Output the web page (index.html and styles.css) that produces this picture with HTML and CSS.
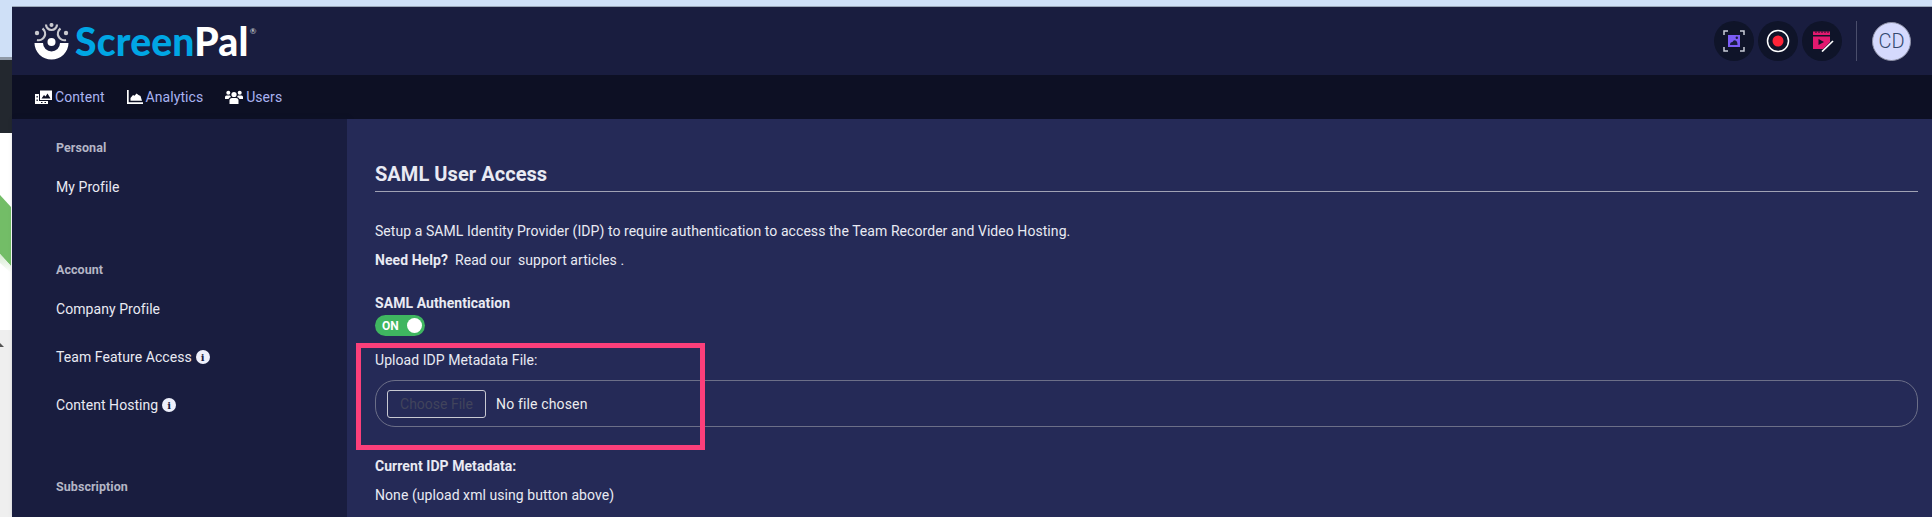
FILE: index.html
```html
<!DOCTYPE html>
<html lang="en">
<head>
<meta charset="utf-8">
<title>SAML User Access</title>
<link rel="stylesheet" href="styles.css">
</head>
<body>
<div class="topstrip"></div>
<div class="shell">
  <div class="backdrop">
    <div class="bd-blue"></div>
    <div class="bd-dark"></div>
    <div class="bd-white">
      <svg class="bd-shape" width="11" height="197" viewBox="0 0 11 197"><defs><linearGradient id="fade" x1="0" y1="0" x2="0" y2="1"><stop offset="0" stop-color="#d5ead0"/><stop offset="1" stop-color="#fff"/></linearGradient></defs><polygon points="0,62 11,74 11,133 0,121" fill="#73bd67"/><polygon points="0,121 11,133 11,140 0,130" fill="url(#fade)"/></svg>
    </div>
    <div class="bd-grey"><span class="bd-arrow"></span></div>
  </div>
  <div class="app">
    <header class="header">
      <a class="logo">
        <svg class="logo-mark" width="36" height="37" viewBox="0 0 36 37">
          <path d="M0.500 20 H9 A8.500 8.500 0 0 0 26 20 H34.500 A17 16.500 0 0 1 0.500 20Z" fill="#fff"/>
          <circle cx="17.500" cy="19" r="4" fill="#fff"/>
          <circle cx="17.500" cy="1.900" r="2" fill="#c9c9cf"/>
          <path d="M12 1.500 A5.500 5.500 0 0 0 23 1.500" stroke="#c9c9cf" stroke-width="2.200" fill="none"/>
          <circle cx="3" cy="10" r="2.200" fill="#c9c9cf"/>
          <path d="M8.500 5.500 A6.500 6.500 0 0 1 3 17" stroke="#c9c9cf" stroke-width="2.200" fill="none"/>
          <circle cx="32" cy="10" r="2.200" fill="#c9c9cf"/>
          <path d="M26.500 5.500 A6.500 6.500 0 0 0 32 17" stroke="#c9c9cf" stroke-width="2.200" fill="none"/>
        </svg>
        <span class="logo-text"><span class="logo-blue">Screen</span><span class="logo-white">Pal</span><sup class="logo-r">®</sup></span>
      </a>
      <div class="header-actions">
        <span class="round">
          <svg width="22" height="22" viewBox="0 0 22 22">
            <path d="M1 5V1H5M17 1H21V5M21 17V21H17M5 21H1V17" stroke="#c9cbd6" stroke-width="1.500" fill="none"/>
            <rect x="5" y="5" width="12" height="12" fill="#7b5cf5"/>
            <path d="M7 15 q0-3 2.500-3 q1-2.500 3-1.500 q2 .500 2 4.500Z" fill="#191d3f"/>
            <circle cx="13.800" cy="7.800" r="1.200" fill="#191d3f"/>
          </svg>
        </span>
        <span class="round">
          <svg width="24" height="24" viewBox="0 0 24 24">
            <circle cx="12" cy="12" r="10.500" stroke="#fff" stroke-width="1.500" fill="none"/>
            <circle cx="12" cy="12" r="5.500" fill="#ff2438"/>
          </svg>
        </span>
        <span class="round">
          <svg width="24" height="22" viewBox="0 0 24 22">
            <path d="M3 1.500 H20 V5 H3Z" fill="#e2196f"/>
            <path d="M6 1.500 V3 M9 1.500 V3 M12 1.500 V3 M15 1.500 V3 M18 1.500 V3" stroke="#0f1429" stroke-width="1"/>
            <path d="M3 6.500 H20 V12 L13 19 H3Z" fill="#e2196f"/>
            <path d="M8.500 9 L14 12 L8.500 15Z" fill="#0f1429"/>
            <path d="M12 21.500 L23 11" stroke="#fff" stroke-width="1.700"/>
          </svg>
        </span>
        <span class="sep"></span>
        <span class="avatar">CD</span>
      </div>
    </header>
    <nav class="nav">
      <a class="nav-item">
        <svg width="17" height="14" viewBox="0 0 17 14"><path d="M5 0.500 H17 V10 H5Z" fill="#fff"/><path d="M6.500 8.500 L9 5 L10.500 6.500 L12.500 3.500 L15.500 8.500Z" fill="#0d1024"/><path d="M0 4 H4 V14 H0Z M4 11 H13 V14 H4Z" fill="#fff"/><path d="M1.500 6 H2.800 V7.500 H1.500Z M1.500 9.500 H2.800 V11 H1.500Z M6 12 H7.500 V13 H6Z M9.500 12 H11 V13 H9.500Z" fill="#0d1024"/></svg>
        <span>Content</span>
      </a>
      <a class="nav-item">
        <svg width="16" height="14" viewBox="0 0 16 14"><path d="M0 0 H1.700 V12.300 H16 V14 H0Z" fill="#fff"/><path d="M3.500 10.800 V8 L6 5 L7.500 5.800 L9.500 3.500 L11.500 5 L13.500 6 L15 10.800Z" fill="#fff"/></svg>
        <span>Analytics</span>
      </a>
      <a class="nav-item">
        <svg width="18" height="14" viewBox="0 0 18 14"><circle cx="9" cy="4.500" r="2.600" fill="#fff"/><path d="M4.500 14 V10.500 Q4.500 8 7 8 H11 Q13.500 8 13.500 10.500 V14Z" fill="#fff"/><circle cx="3.300" cy="2.800" r="2" fill="#fff"/><circle cx="14.700" cy="2.800" r="2" fill="#fff"/><path d="M0 9 V7 Q0 5.500 1.500 5.500 H5 Q5.800 6.500 6 7 Q4 7.500 3.500 9Z M18 9 V7 Q18 5.500 16.500 5.500 H13 Q12.200 6.500 12 7 Q14 7.500 14.500 9Z" fill="#fff"/></svg>
        <span>Users</span>
      </a>
    </nav>
    <div class="body">
      <aside class="sidebar">
        <section class="side-section first">
          <h4 class="side-heading">Personal</h4>
          <a class="side-link">My Profile</a>
        </section>
        <section class="side-section">
          <h4 class="side-heading">Account</h4>
          <a class="side-link">Company Profile</a>
          <a class="side-link">Team Feature Access <span class="info">i</span></a>
          <a class="side-link">Content Hosting <span class="info">i</span></a>
        </section>
        <section class="side-section">
          <h4 class="side-heading">Subscription</h4>
        </section>
      </aside>
      <main class="main">
        <h2 class="title">SAML User Access</h2>
        <p class="para">Setup a SAML Identity Provider (IDP) to require authentication to access the Team Recorder and Video Hosting.</p>
        <p class="para help"><strong>Need Help?</strong>&nbsp; Read our &nbsp;support articles .</p>
        <div class="label strong-label">SAML Authentication</div>
        <div class="toggle"><span class="toggle-text">ON</span><span class="knob"></span></div>
        <div class="label upload-label">Upload IDP Metadata File:</div>
        <div class="file-box"><input class="file" type="file" disabled></div>
        <div class="label strong-label current">Current IDP Metadata:</div>
        <div class="label none">None (upload xml using button above)</div>
        <div class="callout"></div>
      </main>
    </div>
  </div>
</div>
</body>
</html>
```
FILE: styles.css
```css
* { box-sizing: border-box; }
html, body { margin: 0; height: 517px; overflow: hidden; }
body { background: #cfe0f7; font-family: Roboto, "Liberation Sans", sans-serif; font-size: 14px; letter-spacing: 0.06px; color: #e9eaf3; }
.topstrip { height: 7px; background: #cfe0f7; border-bottom: 1px solid #9aa7b8; }
.shell { display: flex; height: 510px; }
.backdrop { width: 12px; flex: none; display: flex; flex-direction: column; margin-top: -7px; }
.bd-blue { height: 60px; background: #cfe0f7; flex: none; border-bottom: 3px solid #8f99a6; }
.bd-dark { height: 73px; background: #23282f; flex: none; }
.bd-white { height: 197px; background: #fff; flex: none; }
.bd-shape { display: block; }
.bd-grey { flex: 1; background: #efefef; position: relative; }
.bd-arrow { position: absolute; left: 0; top: 13px; border-left: 4px solid transparent; border-right: 4px solid transparent; border-bottom: 4px solid #555; margin-left: -4px; }
.app { flex: 1; min-width: 0; display: flex; flex-direction: column; }
.header { height: 68px; flex: none; background: #191d3f; display: flex; align-items: center; justify-content: space-between; padding: 0 21px 0 22px; }
.logo { display: flex; align-items: center; gap: 5px; }
.logo-mark { display: block; }
.logo-text { font-family: Lato, Roboto, sans-serif; font-weight: 900; font-size: 39px; line-height: 40px; letter-spacing: 0.2px; position: relative; }
.logo-blue { color: #00a6e4; }
.logo-white { color: #fff; }
.logo-r { font-size: 8px; font-weight: 400; color: #ddd; vertical-align: top; line-height: 20px; margin-left: 1px; }
.header-actions { display: flex; align-items: center; gap: 4px; }
.round { width: 40px; height: 40px; border-radius: 50%; background: #0f1429; display: flex; align-items: center; justify-content: center; }
.sep { width: 1px; height: 40px; background: #4a4e6b; margin: 0 11px 0 10px; }
.avatar { width: 39px; height: 39px; border-radius: 50%; background: #d5d9fd; border: 1px solid #8f92a8; color: #33486e; font-size: 20px; font-weight: 300; letter-spacing: 0; display: flex; align-items: center; justify-content: center; }
.nav { height: 44px; flex: none; background: #0d1024; display: flex; align-items: center; padding-left: 23px; gap: 22px; }
.nav-item { display: flex; align-items: center; gap: 3px; color: #a9b3f1; font-size: 14px; }
.nav-item svg { display: block; }
.body { flex: 1; min-height: 0; display: flex; }
.sidebar { width: 335px; flex: none; background: #191d3f; padding: 19px 0 0 44px; box-shadow: 2px 0 4px rgba(15, 18, 45, .5); position: relative; }
.side-section { margin-bottom: 48px; }
.side-section.first { margin-bottom: 49px; }
.side-heading { margin: 0 0 5px; height: 20px; line-height: 20px; font-size: 12.5px; font-weight: 700; color: #b4b6c6; }
.side-link { display: flex; align-items: center; gap: 4px; height: 48px; color: #e9eaf3; font-size: 14px; }
.info { width: 14px; height: 14px; border-radius: 50%; background: #eef0fb; color: #191d3f; font-family: "DejaVu Serif", serif; font-size: 10px; font-weight: 700; display: inline-flex; align-items: center; justify-content: center; }
.main { flex: 1; min-width: 0; background: #252a57; padding: 0 14px 0 28px; position: relative; }
.title { margin: 42px 0 0; height: 31px; line-height: 27px; font-size: 20px; font-weight: 700; color: #e9eaf3; border-bottom: 1px solid #a0a2b4; }
.para { margin: 0; line-height: 20px; }
.title + .para { margin-top: 29px; }
.help { margin-top: 9px; }
.help strong { font-weight: 700; }
.label { line-height: 20px; }
.strong-label { font-weight: 700; }
.help + .label { margin-top: 23px; }
.toggle { width: 50px; height: 21px; margin-top: 2px; border-radius: 11px; background: #3fb660; display: flex; align-items: center; justify-content: space-between; padding: 0 3px 0 7px; }
.toggle-text { font-size: 12px; font-weight: 700; color: #fff; }
.knob { width: 15px; height: 15px; border-radius: 50%; background: #fff; }
.upload-label { margin-top: 14px; }
.file-box { margin-top: 10px; height: 47px; border: 1px solid #6c6f88; border-radius: 20px; padding: 0 11px; display: flex; align-items: center; }
.file { font-family: Roboto, sans-serif; font-size: 14px; letter-spacing: 0.15px; color: #eceded; width: 300px; }
.file::file-selector-button { width: 99px; height: 28px; margin-right: 10px; padding: 0; background: transparent; border: 1px solid #c8c9d2; border-radius: 3px; color: #41445c; font-family: Roboto, sans-serif; font-size: 14px; }
.current { margin-top: 29px; }
.none { margin-top: 9px; }
.callout { position: absolute; left: 9px; top: 224px; width: 349px; height: 107px; border: 5px solid #fb3f7a; pointer-events: none; }
```
